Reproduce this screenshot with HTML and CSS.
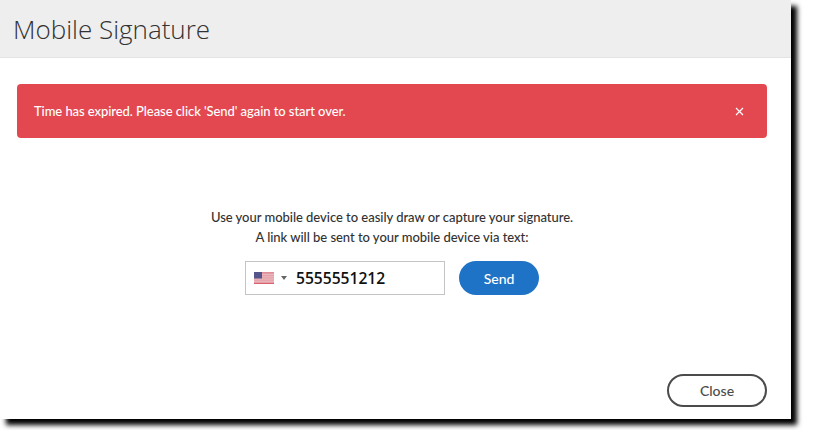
FILE: index.html
```html
<!DOCTYPE html>
<html lang="en">
<head>
  <meta charset="UTF-8">
  <title>Mobile Signature</title>
  <link rel="stylesheet" href="styles.css">
</head>
<body>

  <div class="dialog">
    <div class="dialog-header">
      <h1>Mobile Signature</h1>
    </div>

    <div class="dialog-body">
      <div class="alert">
        <span>Time has expired. Please click 'Send' again to start over.</span>
        <svg class="alert-close" width="9" height="9" viewBox="0 0 9 9">
          <path d="M1 1L8 8M8 1L1 8" stroke="#fff" stroke-width="1.2" fill="none"/>
        </svg>
      </div>

      <div class="message">
        <p>Use your mobile device to easily draw or capture your signature.</p>
        <p>A link will be sent to your mobile device via text:</p>
      </div>

      <div class="send-row">
        <div class="phone-input">
          <svg class="flag" width="20" height="12" viewBox="0 0 20 12">
            <rect width="20" height="12" fill="#e08f98"/>
            <rect y="1.8" width="20" height="0.9" fill="#efc9cd"/>
            <rect y="3.7" width="20" height="0.9" fill="#efc9cd"/>
            <rect y="5.6" width="20" height="0.9" fill="#efc9cd"/>
            <rect y="7.5" width="20" height="0.9" fill="#efc9cd"/>
            <rect y="9.4" width="20" height="0.9" fill="#efc9cd"/>
            <rect y="11" width="20" height="1" fill="#d9606c"/>
            <rect width="8" height="6.5" fill="#55558c"/>
          </svg>
          <span class="caret"></span>
          <span class="phone-number">5555551212</span>
        </div>
        <button class="btn-send">Send</button>
      </div>
    </div>

    <div class="dialog-footer">
      <button class="btn-close">Close</button>
    </div>
  </div>

</body>
</html>
```

FILE: styles.css
```css
html, body {
  margin: 0;
  padding: 0;
  background-color: #fff;
}

body {
  width: 830px;
  height: 430px;
  overflow: hidden;
  font-family: "Open Sans", "Noto Sans", sans-serif;
  color: #323232;
}

.dialog {
  width: 791px;
  height: 419px;
  background-color: #fff;
  box-shadow: 6px 6px 5px #000;
  display: flex;
  flex-direction: column;
}

.dialog-header {
  height: 57px;
  background-color: #eee;
  border-bottom: 1px solid #e3e3e3;
  display: flex;
  align-items: center;
  padding-left: 13px;
}

h1 {
  margin: 0;
  font-size: 26px;
  font-weight: 300;
  color: #323232;
}

.dialog-body {
  flex: 1;
  padding: 26px 24px 0 17px;
}

.alert {
  height: 54px;
  background-color: #e34850;
  border-radius: 4px;
  display: flex;
  align-items: center;
  justify-content: space-between;
  padding: 0 23px 0 17px;
  color: #fff;
  font-family: Lato, "Open Sans", sans-serif;
  font-size: 13px;
  font-weight: 500;
  letter-spacing: -0.07px;
}

.message {
  margin-top: 69px;
  text-align: center;
  font-family: Lato, "Open Sans", sans-serif;
  font-size: 13px;
  font-weight: 500;
  letter-spacing: -0.03px;
  line-height: 20px;
  color: #323232;
}

.message p {
  margin: 0;
}

.send-row {
  display: flex;
  justify-content: center;
  gap: 14px;
  margin-top: 14px;
}

.phone-input {
  width: 200px;
  height: 34px;
  border: 1px solid #c4c4c4;
  display: flex;
  align-items: center;
  padding-left: 8px;
  box-sizing: border-box;
}

.flag {
  margin-right: 7px;
}

.caret {
  width: 0;
  height: 0;
  border-left: 3px solid transparent;
  border-right: 3px solid transparent;
  border-top: 4px solid #666;
  margin-right: 9px;
}

.phone-number {
  font-size: 15.6px;
  font-weight: 600;
  color: #111;
}

button {
  font-family: Lato, "Open Sans", sans-serif;
  font-size: 14px;
  font-weight: 500;
  cursor: pointer;
}

.btn-send {
  width: 80px;
  height: 34px;
  border: none;
  border-radius: 17px;
  background-color: #1f73c7;
  color: #fff;
}

.dialog-footer {
  display: flex;
  justify-content: flex-end;
  padding: 0 24px 12px 0;
}

.btn-close {
  width: 100px;
  height: 33px;
  background-color: #fff;
  border: 2px solid #4b4b4b;
  border-radius: 17px;
  color: #4b4b4b;
}
```
